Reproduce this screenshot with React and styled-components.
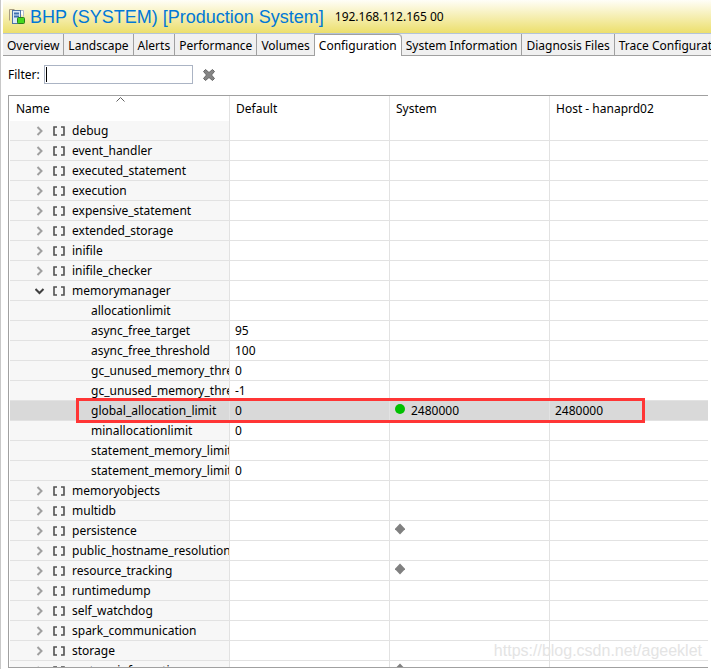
import React, { useState } from "react";
import styled, { createGlobalStyle } from "styled-components";

const tabs = [
  "Overview",
  "Landscape",
  "Alerts",
  "Performance",
  "Volumes",
  "Configuration",
  "System Information",
  "Diagnosis Files",
  "Trace Configuration",
];

const sections = [
  { name: "debug" },
  { name: "event_handler" },
  { name: "executed_statement" },
  { name: "execution" },
  { name: "expensive_statement" },
  { name: "extended_storage" },
  { name: "inifile" },
  { name: "inifile_checker" },
  {
    name: "memorymanager",
    params: [
      { name: "allocationlimit" },
      { name: "async_free_target", value: "95" },
      { name: "async_free_threshold", value: "100" },
      { name: "gc_unused_memory_threshold_abs", value: "0" },
      { name: "gc_unused_memory_threshold_rel", value: "-1" },
      {
        name: "global_allocation_limit",
        value: "0",
        system: "2480000",
        host: "2480000",
        selected: true,
      },
      { name: "minallocationlimit", value: "0" },
      { name: "statement_memory_limit" },
      { name: "statement_memory_limit_threshold", value: "0" },
    ],
  },
  { name: "memoryobjects" },
  { name: "multidb" },
  { name: "persistence", changed: true },
  { name: "public_hostname_resolution" },
  { name: "resource_tracking", changed: true },
  { name: "runtimedump" },
  { name: "self_watchdog" },
  { name: "spark_communication" },
  { name: "storage" },
  { name: "system_information", changed: true },
];

const SystemIcon = () => (
  <svg width="18" height="18" viewBox="0 0 18 18" aria-hidden="true">
    <path d="M1.5 12.5v-11h5" fill="none" stroke="#a89c80" />
    <path d="M10 2.5h5.5v6" fill="#fff" stroke="#b4bcc8" />
    <rect x="4.5" y="2.5" width="8" height="13" fill="#dbe9f7" stroke="#4f74a8" />
    <path d="M6 5.5h5M6 8.5h5" stroke="#3f70b0" strokeWidth="2" />
    <rect x="9.5" y="9.5" width="7" height="6" rx="1" fill="#47d81e" stroke="#2c7a1c" />
  </svg>
);

const ClearIcon = () => (
  <svg width="14" height="14" viewBox="0 0 14 14" aria-hidden="true">
    <path
      d="M3.5 1.5L7 4.5l3.5-3 2 2L9.5 7l3 3.5-2 2L7 9.5l-3.5 3-2-2 3-3.5-3-3.5z"
      fill="#858585"
      stroke="#666"
    />
  </svg>
);

const Arrow = ({ open }) => (
  <svg width="10" height="10" viewBox="0 0 10 10" aria-hidden="true">
    <path
      d={open ? "M.5 3l4 4 4-4" : "M2.5 1l4 4-4 4"}
      fill="none"
      stroke={open ? "#404040" : "#a0a0a0"}
      strokeWidth="2"
    />
  </svg>
);

const SectionIcon = () => (
  <svg width="13" height="10" viewBox="0 0 13 10" aria-hidden="true">
    <path d="M5 1H2v8h3M9 1h3v8H9" fill="none" stroke="#505050" strokeWidth="1.6" />
  </svg>
);

const Dot = () => (
  <svg width="10" height="10" viewBox="0 0 10 10" aria-hidden="true">
    <circle cx="5" cy="5" r="5" fill="#00c000" />
  </svg>
);

const Diamond = () => (
  <svg width="10" height="12" viewBox="0 0 10 12" aria-hidden="true">
    <path d="M5 .5L10.3 6 5 11.5-.3 6z" fill="#808080" />
  </svg>
);

const SectionRow = ({ section, open, onToggle }) => (
  <Row>
    <NameCell>
      <SectionName>
        <Toggle aria-label={section.name} aria-expanded={open} onClick={onToggle}>
          <Arrow open={open} />
        </Toggle>
        <SectionIcon />
        {section.name}
      </SectionName>
    </NameCell>
    <Cell />
    <Cell>
      {section.changed && (
        <Mark>
          <Diamond />
        </Mark>
      )}
    </Cell>
    <Cell />
  </Row>
);

const ParamRow = ({ param }) => (
  <Row $selected={param.selected}>
    <NameCell $selected={param.selected}>
      <ParamName>{param.name}</ParamName>
      {param.selected && <Outline />}
    </NameCell>
    <Cell>{param.value}</Cell>
    <Cell>
      {param.system && (
        <Mark>
          <Dot />
          {param.system}
        </Mark>
      )}
    </Cell>
    <Cell>{param.host}</Cell>
  </Row>
);

const App = () => {
  const [active, setActive] = useState("Configuration");
  const [filter, setFilter] = useState("");
  const [opened, setOpened] = useState(["memorymanager"]);

  const toggle = (name) => {
    setOpened(
      opened.includes(name) ? opened.filter((n) => n !== name) : [...opened, name]
    );
  };

  return (
    <Editor>
      <GlobalStyle />
      <TitleBar>
        <SystemIcon />
        <Title>BHP (SYSTEM) [Production System]</Title>
        <span>192.168.112.165 00</span>
      </TitleBar>
      <TabBar role="tablist">
        {tabs.map((tab) => (
          <Tab
            key={tab}
            role="tab"
            aria-selected={tab === active}
            $active={tab === active}
            onClick={() => setActive(tab)}
          >
            {tab}
          </Tab>
        ))}
      </TabBar>
      <FilterBar>
        <label htmlFor="filter">Filter:</label>
        <FilterInput
          id="filter"
          autoFocus
          $empty={filter === ""}
          value={filter}
          onChange={(e) => setFilter(e.target.value)}
        />
        <ClearButton aria-label="Clear" onClick={() => setFilter("")}>
          <ClearIcon />
        </ClearButton>
      </FilterBar>
      <Tree>
        <Table>
          <colgroup>
            <col width="220" />
            <col width="160" />
            <col width="160" />
            <col />
          </colgroup>
          <thead>
            <tr>
              <HeadCell>
                <SortMark width="9" height="5" viewBox="0 0 9 5" aria-hidden="true">
                  <path d="M.5 4.5l4-4 4 4" fill="none" stroke="#606060" />
                </SortMark>
                Name
              </HeadCell>
              <HeadCell>Default</HeadCell>
              <HeadCell>System</HeadCell>
              <HeadCell>Host - hanaprd02</HeadCell>
            </tr>
          </thead>
          <tbody>
            {sections
              .filter((section) => section.name.includes(filter))
              .map((section) => {
                const open = opened.includes(section.name);
                return (
                  <React.Fragment key={section.name}>
                    <SectionRow
                      section={section}
                      open={open}
                      onToggle={() => toggle(section.name)}
                    />
                    {open &&
                      section.params?.map((param) => (
                        <ParamRow key={param.name} param={param} />
                      ))}
                  </React.Fragment>
                );
              })}
          </tbody>
        </Table>
      </Tree>
      <Watermark>https://blog.csdn.net/ageeklet</Watermark>
    </Editor>
  );
};

export default App;

const GlobalStyle = createGlobalStyle`
  * {
    box-sizing: border-box;
  }

  body {
    margin: 0;
    background: #fff;
  }

  body, button, input {
    font: 12px/20px "Noto Sans", "Open Sans", sans-serif;
    color: #000;
  }
`;

const Editor = styled.main`
  position: relative;
  display: flex;
  flex-direction: column;
  height: 100vh;
  padding: 0 0 1px 2px;
  border-left: 1px solid #c8c8c8;
  overflow: hidden;
`;

const TitleBar = styled.header`
  display: flex;
  flex: none;
  align-items: center;
  height: 33px;
  padding-left: 5px;
  background: linear-gradient(#fffef8, #ecdf6c);
`;

const Title = styled.h1`
  margin: 0 11px 0 4px;
  font: 18px/20px "Liberation Sans", Arial, sans-serif;
  color: #0078d7;
  white-space: nowrap;
`;

const TabBar = styled.div`
  display: flex;
  flex: none;
  height: 23px;
  border-top: 1px solid #b4c4d8;
  background: #f0f0f0;
  box-shadow: inset 0 -1px #a0a0a0;
  overflow: hidden;
`;

const Tab = styled.button`
  flex: none;
  padding: 2px 4px 0;
  border: 0;
  border-right: 1px solid #a0a0a0;
  background: ${({ $active }) => ($active ? "#fff" : "transparent")};
  border-radius: ${({ $active }) => ($active ? "0 4px 0 0" : "0")};
  box-shadow: ${({ $active }) => ($active ? "inset 0 1px #a0a0a0" : "none")};
  white-space: nowrap;
`;

const FilterBar = styled.div`
  display: flex;
  flex: none;
  align-items: center;
  height: 39px;
  padding: 0 5px 2px;
`;

const FilterInput = styled.input`
  width: 149px;
  height: 19px;
  margin: 0 9px 0 4px;
  padding: 0 1px;
  border: 1px solid #abb4c4;
  border-radius: 0;
  background: ${({ $empty }) =>
    $empty
      ? "linear-gradient(#000, #000) 1px 1px / 1px 15px no-repeat #fff"
      : "#fff"};
  outline: none;
`;

const ClearButton = styled.button`
  display: flex;
  padding: 0;
  border: 0;
  background: none;
`;

const Tree = styled.div`
  flex: 1;
  min-height: 0;
  margin: 0 3px 0 5px;
  padding-left: 1px;
  border: 1px solid #a0a0a0;
  border-right: 0;
  overflow: hidden;
`;

const Table = styled.table`
  width: 100%;
  table-layout: fixed;
  border-collapse: separate;
  border-spacing: 0;
`;

const HeadCell = styled.th`
  position: relative;
  height: 25px;
  padding: 0 6px;
  border-right: 1px solid #e2e2e2;
  font-weight: normal;
  text-align: left;

  &:last-child {
    border-right: 0;
  }
`;

const SortMark = styled.svg`
  position: absolute;
  top: 1px;
  left: 106px;
`;

const Row = styled.tr`
  position: relative;
  background: ${({ $selected }) => ($selected ? "#d9d9d9" : "transparent")};
`;

const Cell = styled.td`
  height: 20px;
  padding: 0 5px;
  border-right: 1px solid #e2e2e2;
  border-bottom: 1px solid #e2e2e2;
  line-height: 19px;
  white-space: nowrap;
  overflow: hidden;

  &:last-child {
    border-right: 0;
  }
`;

const NameCell = styled(Cell)`
  padding: 0;
  background: ${({ $selected }) => ($selected ? "transparent" : "#f7f7f7")};
`;

const SectionName = styled.div`
  display: flex;
  align-items: center;
  gap: 7px;
  padding-left: 25px;

  svg {
    flex: none;
  }
`;

const ParamName = styled.div`
  padding-left: 81px;
  overflow: hidden;
`;

const Toggle = styled.button`
  display: flex;
  padding: 0;
  border: 0;
  background: none;
`;

const Mark = styled.div`
  display: flex;
  align-items: center;
  gap: 6px;

  svg {
    margin-bottom: 3px;
  }
`;

const Outline = styled.div`
  position: absolute;
  z-index: 1;
  top: -3px;
  bottom: -2px;
  left: 66px;
  width: 569px;
  border: 3px solid #ff3535;
  pointer-events: none;
`;

const Watermark = styled.div`
  position: absolute;
  right: 9px;
  bottom: 8px;
  font: 16px/20px "Liberation Sans", Arial, sans-serif;
  color: #e4e4e4;
`;
